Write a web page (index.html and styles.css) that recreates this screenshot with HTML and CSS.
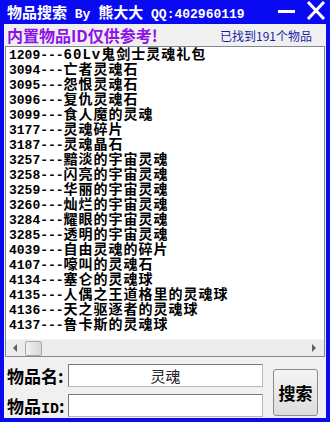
FILE: index.html
```html
<!DOCTYPE html>
<html lang="zh-CN">
  <head>
    <meta charset="UTF-8" />
    <title>物品搜索</title>
    <link rel="stylesheet" href="styles.css">
  </head>
  <body>
    <div id="win">
      <div class="titlebar">
        <span class="title"><span class="cj">物品搜索</span> By <span class="cj">熊大大</span> QQ:402960119</span>
        <span class="min"></span>
        <svg class="close" width="20" height="19" viewBox="0 0 20 19">
          <path d="M2 1 L18 18 M18 1 L2 18" stroke="#fff" stroke-width="3" />
        </svg>
      </div>
      <div class="panel">
        <div class="head">
          <span class="note">内置物品ID仅供参考!</span>
          <span class="count">已找到191个物品</span>
        </div>
        <div class="listbox">
          <ul class="rows">
            <li>1209---<span class="nm">60Lv鬼剑士灵魂礼包</span></li>
            <li>3094---<span class="nm">亡者灵魂石</span></li>
            <li>3095---<span class="nm">怨恨灵魂石</span></li>
            <li>3096---<span class="nm">复仇灵魂石</span></li>
            <li>3099---<span class="nm">食人魔的灵魂</span></li>
            <li>3177---<span class="nm">灵魂碎片</span></li>
            <li>3187---<span class="nm">灵魂晶石</span></li>
            <li>3257---<span class="nm">黯淡的宇宙灵魂</span></li>
            <li>3258---<span class="nm">闪亮的宇宙灵魂</span></li>
            <li>3259---<span class="nm">华丽的宇宙灵魂</span></li>
            <li>3260---<span class="nm">灿烂的宇宙灵魂</span></li>
            <li>3284---<span class="nm">耀眼的宇宙灵魂</span></li>
            <li>3285---<span class="nm">透明的宇宙灵魂</span></li>
            <li>4039---<span class="nm">自由灵魂的碎片</span></li>
            <li>4107---<span class="nm">嚎叫的灵魂石</span></li>
            <li>4134---<span class="nm">塞仑的灵魂球</span></li>
            <li>4135---<span class="nm">人偶之王道格里的灵魂球</span></li>
            <li>4136---<span class="nm">天之驱逐者的灵魂球</span></li>
            <li>4137---<span class="nm">鲁卡斯的灵魂球</span></li>
          </ul>
          <div class="hscroll">
            <span class="arrow left"></span>
            <span class="thumb"></span>
            <span class="arrow right"></span>
          </div>
        </div>
        <div class="form">
          <div class="fields">
            <div class="field">
              <label>物品名:</label>
              <div class="input">灵魂</div>
            </div>
            <div class="field">
              <label>物品<span class="mono">ID</span>:</label>
              <div class="input"></div>
            </div>
          </div>
          <button class="search">搜索</button>
        </div>
      </div>
    </div>
  </body>
</html>
```
FILE: styles.css
```css
* {
  margin: 0;
  padding: 0;
  box-sizing: border-box;
}

body {
  background-color: #0a0af2;
  font-family: "Liberation Mono", "Noto Sans CJK SC", monospace;
}

#win {
  width: 330px;
  height: 422px;
  background-color: #0a0af2;
  padding: 0 4px 4px 4px;
  display: flex;
  flex-direction: column;
}

.titlebar {
  height: 24px;
  display: flex;
  align-items: center;
  color: #fff;
  padding-left: 3px;
}

.title {
  font-size: 13px;
  font-weight: bold;
  white-space: nowrap;
  flex: 1;
}

.title .cj {
  font-size: 15px;
}

.min {
  width: 17px;
  height: 3px;
  background-color: #fff;
  margin-right: 11px;
  margin-top: -1px;
}

.close {
  margin-top: -3px;
}

.panel {
  flex: 1;
  background-color: #f0f0f0;
  display: flex;
  flex-direction: column;
}

.head {
  height: 22px;
  display: flex;
  align-items: center;
  justify-content: space-between;
  padding: 0 14px 0 3px;
}

.note {
  color: #8e12e8;
  font-size: 16px;
  font-weight: bold;
  font-family: "Noto Sans CJK SC", sans-serif;
}

.count {
  color: #1c1ca8;
  font-size: 12px;
  font-family: "Noto Sans CJK SC", sans-serif;
}

.listbox {
  height: 311px;
  margin: 0 1px;
  background-color: #fff;
  border: 1px solid #828790;
  display: flex;
  flex-direction: column;
}

.rows {
  list-style: none;
  flex: 1;
  overflow: hidden;
  padding: 1px 0 0 3px;
}

.rows li {
  height: 15px;
  line-height: 15px;
  font-size: 13px;
  font-weight: bold;
  color: #000;
  white-space: nowrap;
}

.nm {
  font-size: 14px;
  letter-spacing: 1px;
}

.hscroll {
  height: 17px;
  background-color: #ececec;
  display: flex;
  align-items: center;
  padding: 0 5px;
  border-top: 1px solid #f4f4f4;
}

.arrow {
  width: 0;
  height: 0;
  border-top: 4px solid transparent;
  border-bottom: 4px solid transparent;
}

.arrow.left {
  border-right: 4px solid #606060;
  margin-left: 2px;
}

.arrow.right {
  border-left: 4px solid #606060;
  margin-left: auto;
  margin-right: 3px;
}

.thumb {
  width: 17px;
  height: 15px;
  margin-left: 8px;
  border: 1px solid #a8a8a8;
  border-radius: 2px;
  background: linear-gradient(to right, #f2f2f2, #d6d6d6);
}

.form {
  display: flex;
  align-items: center;
  padding: 6px 8px 0 3px;
}

.fields {
  flex: 1;
  display: flex;
  flex-direction: column;
  gap: 5px;
}

.field {
  display: flex;
  align-items: center;
}

.field label {
  width: 61px;
  font-size: 17px;
  font-weight: bold;
  font-family: "Noto Sans CJK SC", sans-serif;
  white-space: nowrap;
}

.mono {
  font-family: "Liberation Mono", monospace;
  font-size: 15px;
}

.input {
  width: 195px;
  height: 23px;
  background-color: #fff;
  border: 1px solid #7a7a7a;
  border-right-color: #b8b8b8;
  border-bottom-color: #b8b8b8;
  font-family: "Noto Sans CJK SC", sans-serif;
  font-size: 15px;
  color: #222;
  text-align: center;
  line-height: 21px;
}

.search {
  width: 45px;
  height: 47px;
  margin-left: 10px;
  margin-top: 3px;
  border: 1px solid #8a8a8a;
  border-radius: 3px;
  background: linear-gradient(to bottom, #f5f5f5, #dcdcdc);
  font-family: "Noto Sans CJK SC", sans-serif;
  font-size: 17px;
  font-weight: bold;
  color: #000;
}
```
